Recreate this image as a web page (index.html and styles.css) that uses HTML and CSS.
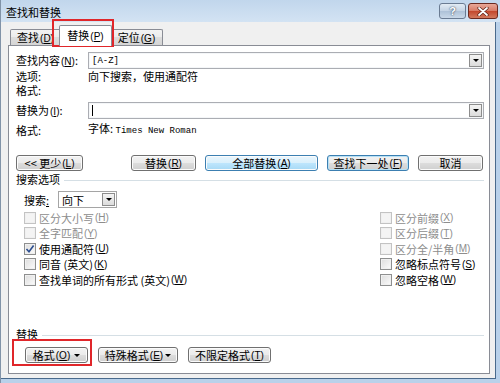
FILE: index.html
```html
<!DOCTYPE html>
<html lang="zh-CN">
<head>
  <meta charset="UTF-8">
  <title>查找和替换</title>
  <link rel="stylesheet" href="styles.css">
</head>
<body>

  <div class="dialog">
    <!-- Barra de título -->
    <div class="titlebar">
      <span class="title">查找和替换</span>
      <div class="caption">
        <span class="cap help">?</span>
        <span class="cap close">
          <svg width="12" height="9" viewBox="0 0 12 9"><path d="M2 1 L10 8 M10 1 L2 8" stroke="#5a1f14" stroke-width="3.2" stroke-linecap="round"/><path d="M2 1 L10 8 M10 1 L2 8" stroke="#fff" stroke-width="1.8" stroke-linecap="round"/></svg>
        </span>
      </div>
    </div>

    <div class="client">
      <!-- Pestañas -->
      <div class="tabs">
        <div class="tab">查找<span class="key">(<u>D</u>)</span></div>
        <div class="tab active">替换<span class="key">(<u>P</u>)</span></div>
        <div class="tab">定位<span class="key">(<u>G</u>)</span></div>
      </div>

      <div class="panel">
        <div class="fields">
          <span class="lbl">查找内容<span class="key">(<u>N</u>)</span>:</span>
          <div class="combo"><span class="mono">[A-Z]</span><span class="drop"></span></div>
          <span class="lbl">选项:</span><span class="val">向下搜索，使用通配符</span>
          <span class="lbl">格式:</span><span class="val"></span>
          <span class="lbl second">替换为<span class="key">(<u>I</u>)</span>:</span>
          <div class="combo second"><span class="caret"></span><span class="drop"></span></div>
          <span class="lbl fmt">格式:</span><span class="val fmt">字体: <span class="mono">Times New Roman</span></span>
        </div>

        <div class="actions">
          <button class="btn less">&lt;&lt; 更少<span class="key">(<u>L</u>)</span></button>
          <button class="btn replace">替换<span class="key">(<u>R</u>)</span></button>
          <button class="btn replace-all">全部替换<span class="key">(<u>A</u>)</span></button>
          <button class="btn find-next">查找下一处<span class="key">(<u>F</u>)</span></button>
          <button class="btn cancel">取消</button>
        </div>

        <div class="group-title search-title"><span>搜索选项</span></div>

        <div class="search-row">
          <span class="search-lbl">搜索<u>:</u></span>
          <div class="select"><span>向下</span><span class="drop"></span></div>
        </div>

        <div class="options">
          <div class="col">
            <div class="check disabled"><span class="box"></span>区分大小写<span class="key">(<u>H</u>)</span></div>
            <div class="check disabled"><span class="box"></span>全字匹配<span class="key">(<u>Y</u>)</span></div>
            <div class="check"><span class="box checked"><svg width="10" height="10" viewBox="0 0 10 10"><path d="M1.5 5 L4 7.8 L8.6 1.6" fill="none" stroke="#2b4d8f" stroke-width="1.6"/></svg></span>使用通配符<span class="key">(<u>U</u>)</span></div>
            <div class="check"><span class="box"></span>同音 (英文)<span class="key">(<u>K</u>)</span></div>
            <div class="check"><span class="box"></span>查找单词的所有形式 (英文)<span class="key">(<u>W</u>)</span></div>
          </div>
          <div class="col right">
            <div class="check disabled"><span class="box"></span>区分前缀<span class="key">(<u>X</u>)</span></div>
            <div class="check disabled"><span class="box"></span>区分后缀<span class="key">(<u>T</u>)</span></div>
            <div class="check disabled"><span class="box"></span>区分全/半角<span class="key">(<u>M</u>)</span></div>
            <div class="check"><span class="box"></span>忽略标点符号<span class="key">(<u>S</u>)</span></div>
            <div class="check"><span class="box"></span>忽略空格<span class="key">(<u>W</u>)</span></div>
          </div>
        </div>

        <!-- Sección inferior: reemplazar -->
        <div class="bottom">
          <div class="group-title"><span>替换</span></div>
          <div class="bottom-btns">
            <button class="btn fmt-btn">格式<span class="key">(<u>O</u>)</span><span class="arrow"></span></button>
            <button class="btn special-btn">特殊格式<span class="key">(<u>E</u>)</span><span class="arrow"></span></button>
            <button class="btn nofmt-btn">不限定格式<span class="key">(<u>T</u>)</span></button>
          </div>
        </div>
      </div>
    </div>
  </div>

  <!-- Marcas rojas -->
  <div class="mark mark-tab"></div>
  <div class="mark mark-fmt"></div>

</body>
</html>
```

FILE: styles.css
```css
* {
  box-sizing: border-box;
}

body {
  margin: 0;
  padding: 0;
  width: 500px;
  height: 383px;
  overflow: hidden;
  background-color: #b9d1ea;
  font-family: "Noto Sans CJK SC", "Liberation Sans", sans-serif;
  font-size: 11px;
  color: #000;
  position: relative;
}

.dialog {
  width: 500px;
  height: 383px;
  display: flex;
  flex-direction: column;
  border-left: 1px solid #8193a8;
}

/* Barra de título */
.titlebar {
  height: 22px;
  flex: none;
  display: flex;
  padding-left: 5px;
  background: linear-gradient(#c1d6ec, #d3e3f3);
}

.title {
  flex: 1;
  line-height: 24px;
  font-size: 11px;
}

.caption {
  display: flex;
  gap: 2px;
  margin-top: 3px;
  margin-right: 2px;
}

.cap {
  height: 16px;
  border: 1px solid #6a7b92;
  border-radius: 3px;
  display: flex;
  align-items: center;
  justify-content: center;
}

.help {
  width: 27px;
  background: linear-gradient(#e2ebf4, #c3d3e4 50%, #adc1d7 51%, #c9d8e8);
  color: #fff;
  font-family: "Liberation Sans", sans-serif;
  font-weight: bold;
  font-size: 11px;
  text-shadow: 0 0 2px #44566e, 0 0 1px #44566e;
}

.close {
  width: 30px;
  border-color: #6b2a20;
  background: linear-gradient(#e9a898, #d77a65 50%, #c2462c 51%, #d27a5e);
}

/* Área cliente */
.client {
  flex: 1;
  display: flex;
  flex-direction: column;
  background-color: #f0f0f0;
  padding: 0 5px 4px 7px;
  margin: 0 4px 4px 0;
  border-right: 1px solid #4a6a8c;
  border-bottom: 1px solid #4a6a8c;
}

.tabs {
  height: 23px;
  flex: none;
  display: flex;
  align-items: flex-end;
  padding-left: 2px;
}

.tab {
  height: 16px;
  padding: 0 2px;
  width: 51px;
  border: 1px solid #898c95;
  border-bottom: none;
  border-radius: 2px 2px 0 0;
  background: linear-gradient(#f3f3f3, #ebebeb 50%, #dddddd 50%, #d5d5d5);
  line-height: 15px;
  text-align: center;
  white-space: nowrap;
}

.tab + .tab {
  border-left: none;
}

.tab.active {
  height: 21px;
  width: 53px;
  margin: 0 -2px -1px -2px;
  border-left: 1px solid #898c95;
  background: #fff;
  position: relative;
  z-index: 1;
  line-height: 19px;
}

.tab.active + .tab {
  border-left: 1px solid #898c95;
}

.tabs .tab:last-child {
  width: 53px;
}

.panel {
  flex: 1;
  display: flex;
  flex-direction: column;
  background: #fff;
  border: 1px solid #898c95;
  padding: 6px 5px 10px 7px;
}

.key {
  font-family: "Liberation Sans", sans-serif;
  font-size: 10px;
  margin-left: 1px;
}

.mono {
  font-family: "Liberation Mono", monospace;
  font-size: 9px;
}

/* Campos */
.fields {
  display: grid;
  grid-template-columns: 72px 1fr;
  align-items: center;
}

.lbl, .val {
  line-height: 14px;
  white-space: nowrap;
}

.combo {
  height: 17px;
  border: 1px solid #abadb3;
  display: flex;
  align-items: center;
  padding-left: 3px;
  box-shadow: inset 0 0 0 1px #f4f6f8;
}

.combo .drop {
  margin-left: auto;
}

.second {
  margin-top: 5px;
}

.fmt {
  margin-top: 2px;
}

.caret {
  width: 1px;
  height: 11px;
  background: #000;
}

.drop {
  width: 13px;
  height: 13px;
  margin-right: 1px;
  border: 1px solid #8d8d8d;
  background: linear-gradient(#f4f4f4, #dcdcdc);
  display: flex;
  align-items: center;
  justify-content: center;
}

.drop::after {
  content: "";
  border-left: 3px solid transparent;
  border-right: 3px solid transparent;
  border-top: 3px solid #000;
}

/* Botones */
.actions {
  display: flex;
  gap: 9px;
  margin-top: 17px;
  padding-right: 1px;
}

.btn {
  height: 16px;
  padding: 0;
  border: 1px solid #707070;
  border-radius: 3px;
  background: linear-gradient(#f2f2f2, #ebebeb 50%, #dddddd 50%, #cfcfcf);
  box-shadow: inset 0 0 0 1px #fbfbfb;
  font-family: "Noto Sans CJK SC", sans-serif;
  font-size: 11px;
  line-height: 13px;
  color: #000;
  display: flex;
  align-items: center;
  justify-content: center;
  white-space: nowrap;
}

.less {
  width: 67px;
  margin-right: auto;
}

.replace, .cancel {
  width: 65px;
}

.replace-all {
  width: 113px;
  border-color: #3c7fb1;
  background: linear-gradient(#eaf6fd, #d9f0fc 50%, #bee6fd 50%, #a7d9f5);
}

.find-next {
  width: 82px;
  border-color: #3c7fb1;
  box-shadow: inset 0 0 0 1px #b6e1f6;
}

/* Grupos */
.group-title {
  display: flex;
  align-items: center;
  line-height: 14px;
}

.group-title::after {
  content: "";
  flex: 1;
  height: 1px;
  margin-left: 4px;
  margin-top: 2px;
  background: #d5dfe5;
}

.search-title {
  margin-top: 1px;
}

.search-row {
  display: flex;
  align-items: center;
  margin-top: 5px;
  padding-left: 8px;
}

.search-lbl {
  width: 34px;
}

.select {
  width: 59px;
  height: 17px;
  border: 1px solid #a5a5a5;
  display: flex;
  align-items: center;
  padding-left: 3px;
  line-height: 14px;
}

.select .drop {
  margin-left: auto;
}

.options {
  display: flex;
  margin-top: 2px;
  padding-left: 8px;
}

.col {
  flex: 1;
}

.col.right {
  flex: none;
  width: 104px;
}

.check {
  height: 15.5px;
  display: flex;
  align-items: center;
  white-space: nowrap;
}

.box {
  width: 12px;
  height: 12px;
  margin-right: 3px;
  flex: none;
  border: 1px solid #8e8f8f;
  background: linear-gradient(135deg, #dcdcdc, #fcfcfc);
  box-shadow: inset 0 0 0 1px #f0f0f0;
  display: flex;
  align-items: center;
  justify-content: center;
}

.check.disabled {
  color: #8d8d8d;
}

.check.disabled .box {
  border-color: #c3c3c3;
  background: #f4f4f4;
}

.bottom {
  margin-top: auto;
}

.bottom-btns {
  display: flex;
  gap: 10px;
  margin-top: 6px;
  padding-left: 9px;
}

.fmt-btn {
  width: 63px;
}

.special-btn {
  width: 80px;
}

.nofmt-btn {
  width: 83px;
}

.arrow {
  margin-left: 4px;
  border-left: 3px solid transparent;
  border-right: 3px solid transparent;
  border-top: 3px solid #000;
}

.special-btn .arrow {
  margin-left: 2px;
}

/* Marcas rojas de la captura */
.mark {
  position: absolute;
  border: 2px solid #e0262a;
}

.mark-tab {
  left: 52px;
  top: 19px;
  width: 62px;
  height: 28px;
}

.mark-fmt {
  left: 12px;
  top: 339px;
  width: 80px;
  height: 27px;
}
```
